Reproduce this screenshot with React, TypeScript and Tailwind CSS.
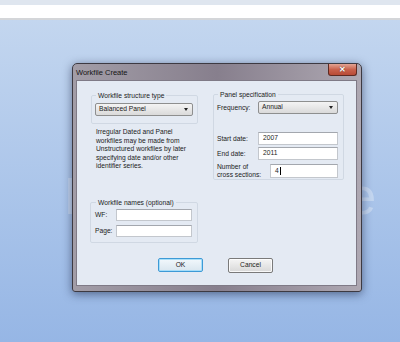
import React from "react";

const FONT = { fontFamily: '"Liberation Sans", Arial, sans-serif' };

function Select({ value, className }: { value: string; className: string }) {
  return (
    <div
      className={`flex items-center justify-between rounded-[2px] border border-[#8e8f8f] bg-gradient-to-b from-[#f4f4f4] to-[#dadada] pl-[3px] pr-[4px] text-[6.7px] text-[#1b1b1b] ${className}`}
    >
      <span>{value}</span>
      <span className="h-0 w-0 border-x-[2.5px] border-t-[3px] border-x-transparent border-t-[#222]" />
    </div>
  );
}

function Field({ value, className, caret }: { value?: string; className: string; caret?: boolean }) {
  return (
    <div
      className={`flex items-center border border-[#c3c7cd] border-t-[#a3a7ae] bg-white pl-[4px] text-[6.7px] text-[#1b1b1b] ${className}`}
    >
      {value}
      {caret && <span className="ml-px h-[8px] w-px bg-black" />}
    </div>
  );
}

export default function App() {
  return (
    <div className="relative h-[342px] w-[400px] overflow-hidden" style={FONT}>
      {/* Desktop */}
      <div className="flex h-full flex-col">
        <div className="h-[5px] bg-[#dfe6ef]" />
        <div className="h-[13px] bg-white" />
        <div className="h-[2px] bg-[#d4d6d9]" />
        <div className="relative flex-1 bg-gradient-to-b from-[#c3d6ef] to-[#96b6e5]">
          <span className="absolute left-[64px] top-[150px] select-none whitespace-nowrap text-[52px] leading-none text-white/30">
            Drop file here
          </span>
        </div>
      </div>

      {/* Window */}
      <div className="absolute left-[72px] top-[63px] flex h-[229px] w-[290px] flex-col rounded-t-[5px] rounded-b-[3px] border border-[#3d3a42] bg-gradient-to-r from-[#a29da7] via-[#877f8d] to-[#aea8b2] shadow-[0_2px_10px_rgba(20,30,60,0.55)]">
        <div className="flex h-[16px] shrink-0 items-start justify-between pl-[3px]">
          <span className="mt-[5px] text-[7.5px] leading-none text-[#151515]">Workfile Create</span>
          <div className="mr-[4px] flex h-[12px] w-[29px] items-center justify-center rounded-b-[3px] border border-t-0 border-[#5e2a22] bg-gradient-to-b from-[#e2a494] via-[#c9624d] to-[#b84a36]">
            <span className="text-[8px] font-bold leading-none text-white [text-shadow:0_0_1px_#3a1510]">✕</span>
          </div>
        </div>

        {/* Client area */}
        <div className="mb-[5px] ml-[3px] mr-[4px] flex flex-1 flex-col border border-[#7f7a86] bg-[#e4eaf3] text-[6.7px] text-[#1b1b1b]">
          <div className="flex">
            {/* Left column */}
            <div className="ml-[13px] flex w-[108px] flex-col">
              <fieldset className="ml-px mt-[10px] h-[33px] rounded-[2px] border border-[#d0d8e3] px-[3px]">
                <legend className="ml-[1px] px-[2px] leading-[9px]">Workfile structure type</legend>
                <Select value="Balanced Panel" className="mt-[3px] h-[13px] w-[98px]" />
              </fieldset>
              <p className="ml-[6px] mt-[4px] leading-[8.6px]">
                Irregular Dated and Panel
                <br />
                workfiles may be made from
                <br />
                Unstructured workfiles by later
                <br />
                specifying date and/or other
                <br />
                identifier series.
              </p>
              <fieldset className="mt-[27px] h-[45px] rounded-[2px] border border-[#d0d8e3] pl-[4px]">
                <legend className="ml-px px-[2px] leading-[9px]">Workfile names (optional)</legend>
                <div className="mt-[2px] flex items-center">
                  <span className="w-[21px] leading-[8px]">WF:</span>
                  <Field className="h-[12px] w-[76px]" />
                </div>
                <div className="mt-[4px] flex items-center">
                  <span className="w-[21px] leading-[8px]">Page:</span>
                  <Field className="h-[12px] w-[76px]" />
                </div>
              </fieldset>
            </div>

            {/* Right column */}
            <fieldset className="ml-[15px] mt-[9px] h-[90px] w-[131px] rounded-[2px] border border-[#d0d8e3] pl-[3px]">
              <legend className="ml-px px-[2px] leading-[9px]">Panel specification</legend>
              <div className="mt-[2px] flex items-center">
                <span className="w-[41px] leading-[8px]">Frequency:</span>
                <Select value="Annual" className="h-[13px] w-[80px]" />
              </div>
              <div className="mt-[18px] flex items-center">
                <span className="w-[41px] leading-[8px]">Start date:</span>
                <Field value="2007" className="h-[13px] w-[80px]" />
              </div>
              <div className="mt-[2px] flex items-center">
                <span className="w-[41px] leading-[8px]">End date:</span>
                <Field value="2011" className="h-[13px] w-[80px]" />
              </div>
              <div className="mt-[3px] flex items-center">
                <span className="w-[53px] leading-[8px]">
                  Number of
                  <br />
                  cross sections:
                </span>
                <Field value="4" caret className="h-[14px] w-[68px]" />
              </div>
            </fieldset>
          </div>

          {/* Buttons */}
          <div className="mt-[15px] flex">
            <button className="ml-[81px] h-[14px] w-[45px] rounded-[2px] border border-[#3d9ad6] bg-gradient-to-b from-[#f2f8fc] to-[#d9e6ef] text-[6.7px] leading-none text-[#1b1b1b] shadow-[inset_0_0_0_1px_rgba(160,220,250,0.9)]">
              OK
            </button>
            <button className="ml-[25px] h-[15px] w-[45px] rounded-[2px] border border-[#7a7a7a] bg-gradient-to-b from-[#f5f5f5] to-[#d8d8d8] text-[6.7px] leading-none text-[#1b1b1b] shadow-[inset_0_0_0_1px_rgba(255,255,255,0.8)]">
              Cancel
            </button>
          </div>
        </div>
      </div>
    </div>
  );
}
